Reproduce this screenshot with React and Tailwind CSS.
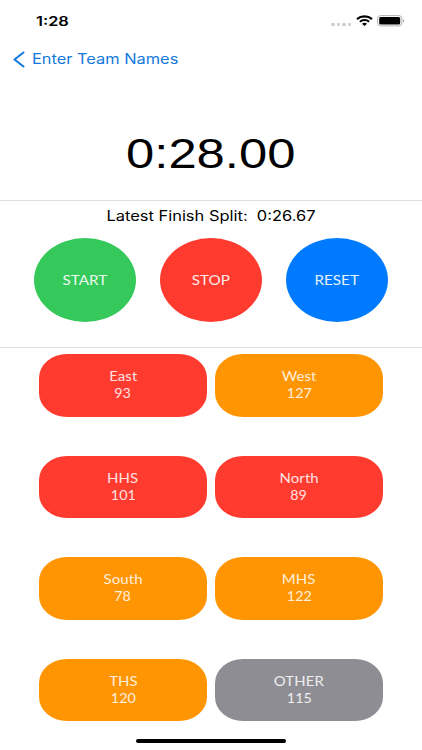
import { useState } from 'react'
import clsx from 'clsx'

const teams = [
  { name: 'East', points: 93, color: 'bg-[#ff3b30]' },
  { name: 'West', points: 127, color: 'bg-[#ff9502]' },
  { name: 'HHS', points: 101, color: 'bg-[#ff3b30]' },
  { name: 'North', points: 89, color: 'bg-[#ff3b30]' },
  { name: 'South', points: 78, color: 'bg-[#ff9502]' },
  { name: 'MHS', points: 122, color: 'bg-[#ff9502]' },
  { name: 'THS', points: 120, color: 'bg-[#ff9502]' },
  { name: 'OTHER', points: 115, color: 'bg-[#8e8d93]' },
]

function StatusBar() {
  return (
    <div className="flex h-10 items-center justify-between pt-[1px] pr-[17px] pl-9">
      <span className="origin-left scale-x-[1.26] text-[13px] leading-4 font-semibold">1:28</span>
      <div className="flex items-center">
        <div className="mt-[7px] mr-[5px] flex gap-[2px]">
          {[0, 1, 2, 3].map((i) => (
            <span key={i} className="h-[3px] w-[3.5px] rounded-[1px] bg-[#cfcfcf]" />
          ))}
        </div>
        <svg className="mr-1" width="17" height="11" viewBox="0 0 17 11" preserveAspectRatio="none">
          <g fill="none" stroke="#000" strokeWidth="2.1">
            <path d="M1 4.1C5.1.5 11.9.5 16 4.1" />
            <path d="M3.9 6.7c2.6-2.2 6.6-2.2 9.2 0" />
          </g>
          <path d="M6 8.7c1.5-1.2 3.5-1.2 5 0L8.5 10.9z" />
        </svg>
        <svg width="28" height="12" viewBox="0 0 28 12">
          <rect x=".6" y=".6" width="24.3" height="10.3" rx="3" fill="#fff" stroke="#b0b0b0" />
          <rect x="2.2" y="2" width="21" height="7.6" rx="1.5" />
          <path d="M26.2 4.2c1.3.5 1.3 2.7 0 3.2z" fill="#888" />
        </svg>
      </div>
    </div>
  )
}

function TimerButton({ label, color, onClick }) {
  return (
    <button
      onClick={onClick}
      className={clsx('flex h-[84px] w-[102px] items-center justify-center rounded-[50%] text-white/90', color)}
    >
      <span className="scale-x-[1.13] font-[Lato,sans-serif] text-[13.5px] leading-4">{label}</span>
    </button>
  )
}

function TeamButton({ team }) {
  return (
    <button
      className={clsx(
        'flex h-[62.5px] flex-col items-center justify-center rounded-[28px/24px] font-[Lato,sans-serif] text-[13px] leading-[17px] text-white/85',
        team.color,
      )}
    >
      <span className="scale-x-[1.15] tracking-[0.1px]">{team.name}</span>
      <span className="scale-x-[1.1]">{team.points}</span>
    </button>
  )
}

export default function App() {
  const [time, setTime] = useState('0:28.00')

  return (
    <div className="flex h-[750px] w-[422px] flex-col overflow-hidden bg-white font-[Inter,sans-serif] text-black">
      <StatusBar />
      <button className="flex h-[38px] items-center pl-[13px] text-[#1479dc]">
        <svg width="12" height="17" viewBox="0 0 12 17" fill="none" stroke="currentColor" strokeWidth="2.1" strokeLinecap="round" strokeLinejoin="round">
          <path d="M10.5 1.5 1.5 8.5l9 7" />
        </svg>
        <span className="ml-[7px] origin-left scale-x-[1.17] text-[14px] leading-5 whitespace-nowrap">
          Enter Team Names
        </span>
      </button>

      <div className="flex h-[123px] items-end justify-center border-b border-[#dedede] pb-[23px]">
        <span className="scale-x-[1.18] font-['Liberation_Sans',sans-serif] text-[43px] leading-[48px]">{time}</span>
      </div>

      <div className="h-[147px] border-b border-[#dedede] pt-[3px]">
        <div className="flex h-6 items-center justify-center">
          <span className="scale-x-[1.175] text-[14px] leading-5 whitespace-pre">{'Latest Finish Split:  0:26.67'}</span>
        </div>
        <div className="mt-[10px] flex justify-center gap-6">
          <TimerButton label="START" color="bg-[#35c85a]" />
          <TimerButton label="STOP" color="bg-[#ff3b30]" />
          <TimerButton label="RESET" color="bg-[#007aff]" onClick={() => setTime('0:00.00')} />
        </div>
      </div>

      <div className="mt-[6px] grid grid-cols-[168px_168px] justify-center gap-x-2 gap-y-[39px]">
        {teams.map((team) => (
          <TeamButton key={team.name} team={team} />
        ))}
      </div>

      <div className="mx-auto mt-auto mb-[7px] h-[4px] w-[150px] rounded-full bg-black" />
    </div>
  )
}
